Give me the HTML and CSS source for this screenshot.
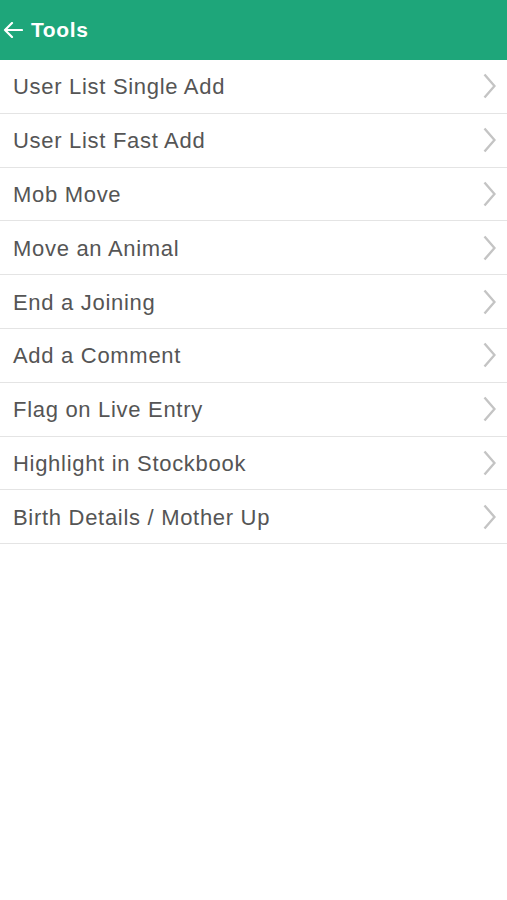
FILE: index.html
```html
<!DOCTYPE html>
<html lang="en">
<head>
    <meta charset="UTF-8">
    <meta name="viewport" content="width=device-width, initial-scale=1.0">
    <title>Tools</title>
    <link rel="stylesheet" href="styles.css">
</head>
<body>
    <header class="topbar">
        <svg class="back" width="20" height="16" viewBox="0 0 20 16">
            <path d="M19 8H2M9 1L2 8l7 7" fill="none" stroke="#fff" stroke-width="2.2" stroke-linecap="round" stroke-linejoin="round"/>
        </svg>
        <h1>Tools</h1>
    </header>
    <ul class="tool-list">
        <li>User List Single Add</li>
        <li>User List Fast Add</li>
        <li>Mob Move</li>
        <li>Move an Animal</li>
        <li>End a Joining</li>
        <li>Add a Comment</li>
        <li>Flag on Live Entry</li>
        <li>Highlight in Stockbook</li>
        <li>Birth Details / Mother Up</li>
    </ul>
</body>
</html>
```

FILE: styles.css
```css
body {
    font-family: "Liberation Sans", Arial, sans-serif;
    background: #fff;
    margin: 0;
    padding: 0;
}
.topbar {
    height: 60px;
    background: #1ea67a;
    color: #fff;
    display: flex;
    align-items: center;
    padding: 0 0 0 3px;
}
.back {
    margin-right: 8px;
}
.topbar h1 {
    margin: 0;
    font-size: 21px;
    font-weight: bold;
    letter-spacing: 0.6px;
}
.tool-list {
    list-style: none;
    margin: 0;
    padding: 0;
}
.tool-list li {
    box-sizing: border-box;
    height: 53.8px;
    border-bottom: 1px solid #e4e4e4;
    display: flex;
    align-items: center;
    padding: 2px 10px 0 13px;
    font-size: 22px;
    letter-spacing: 0.7px;
    color: #555;
    background: url("data:image/svg+xml,%3Csvg xmlns='http://www.w3.org/2000/svg' width='13' height='26' viewBox='0 0 13 26'%3E%3Cpath d='M1.5 1.5l10 11.5-10 11.5' fill='none' stroke='%23c4c4c4' stroke-width='2.4'/%3E%3C/svg%3E") no-repeat right 11px center;
}
```
